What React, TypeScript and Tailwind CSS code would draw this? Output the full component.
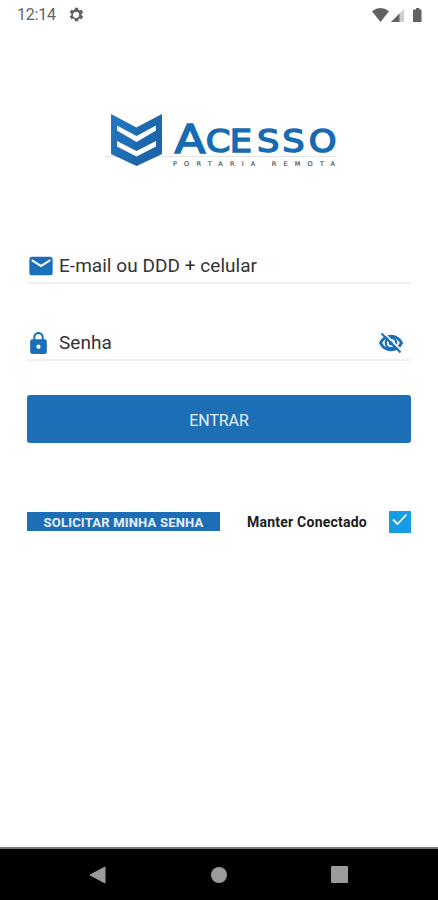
import type { ReactNode } from "react";
import { MdEmail, MdLock, MdSettings } from "react-icons/md";

function StatusBar() {
  return (
    <header className="flex h-7 items-center justify-between pt-px pr-[15px] pl-[17px] text-[#626262]">
      <div className="flex items-center gap-3">
        <span className="text-[16px] leading-7 tracking-[-0.2px]">12:14</span>
        <span className="grid place-items-center">
          <MdSettings className="col-start-1 row-start-1 h-[17px] w-[17px]" />
          <span className="col-start-1 row-start-1 h-[6px] w-[6px] rounded-full bg-white" />
        </span>
      </div>
      <svg viewBox="0 0 52 16" className="h-4 w-[52px]" fill="#626262">
        <path d="M1 4.200Q9.500 -2.200 18 4.200L9.500 15Z" />
        <path d="M33 2V15H20Z" fill="#cfcfcf" />
        <path d="M28.500 6.500V15H20Z" />
        <path d="M44 2.500H45V1H48.500V2.500H50.500V15H42V2.500Z" />
      </svg>
    </header>
  );
}

function Logo() {
  return (
    <svg viewBox="0 0 240 60" className="h-[60px] w-[240px]">
      <defs>
        <linearGradient id="shield" x1="0" y1="0" x2="1" y2="1">
          <stop offset="0" stopColor="#2479c2" />
          <stop offset="1" stopColor="#1b5ea2" />
        </linearGradient>
      </defs>
      <path d="M5 46.500H236" stroke="#e4e4e4" />
      <path d="M11 4L36.500 17.500L62 4V44L36.500 56L11 44Z" fill="url(#shield)" />
      <path d="M36.500 17.500L62 4V44L36.500 56Z" fill="#1d65ac" fillOpacity="0.5" />
      <path d="M17 15.500L36.500 26L56 15.500V20.500L36.500 32L17 20.500Z" fill="#fff" />
      <path d="M17 31L36.500 41L56 31V36.500L36.500 46.500L17 36.500Z" fill="#fff" />
      <g fill="#176bb3" stroke="#176bb3" fontFamily="DejaVu Sans, sans-serif">
        <text x="74.500" y="42.500" fontSize="39.500" textLength="31" lengthAdjust="spacingAndGlyphs" strokeWidth="1.500">A</text>
        <text transform="scale(1.12 1)" x="94.400 115.900 140.200 162.800 186.400" y="42.500" fontSize="31.500" strokeWidth="1.500">CESSO</text>
      </g>
      <text
        x="73"
        y="55.500"
        fontSize="6.500"
        fontFamily="DejaVu Sans, sans-serif"
        fill="#555555"
        stroke="#555555"
        strokeWidth="0.200"
        textLength="162"
      >
        PORTARIA REMOTA
      </text>
    </svg>
  );
}

function EyeOff() {
  return (
    <svg viewBox="0 0 24 22" className="mr-2 h-[22px] w-6" fill="none" stroke="#1b6fb6">
      <path d="M1.500 11C6 2 18 2 22.500 11C18 20 6 20 1.500 11Z" strokeWidth="2.800" />
      <circle cx="12" cy="11" r="5.200" strokeWidth="2.200" />
      <circle cx="12" cy="11" r="2.400" fill="#1b6fb6" stroke="none" />
      <path d="M4.500 0.500L23.500 19.500" stroke="#fff" strokeWidth="1.600" />
      <path d="M2.500 1.500L21.500 20.500" strokeWidth="2.200" />
    </svg>
  );
}

function Field({ icon, label, action }: { icon: ReactNode; label: string; action?: ReactNode }) {
  return (
    <div className="flex h-[34px] items-center border-b-2 border-[#f0f0f0]">
      <span className="flex w-8 shrink-0 text-[#1b6fb6]">{icon}</span>
      <span className="flex-1 text-[19px] leading-8 tracking-[0.04px] text-[#333333]">{label}</span>
      {action}
    </div>
  );
}

function NavBar() {
  return (
    <nav className="flex h-[53px] items-center border-t-2 border-[#777777] bg-black pl-[89px]">
      <svg viewBox="0 0 17 18" className="h-[18px] w-[17px]" fill="#9b9b9b">
        <path d="M1 9L16 1V17Z" stroke="#9b9b9b" strokeLinejoin="round" />
      </svg>
      <span className="ml-[105px] h-4 w-4 rounded-full bg-[#9b9b9b]" />
      <span className="ml-[104px] h-[17px] w-[17px] rounded-[1px] bg-[#9b9b9b]" />
    </nav>
  );
}

export default function App() {
  return (
    <div className="flex h-[900px] w-[438px] flex-col overflow-hidden bg-white font-[Roboto,sans-serif]">
      <StatusBar />
      <main className="flex flex-1 flex-col px-[27px] pt-[82px]">
        <div className="ml-[73px]">
          <Logo />
        </div>
        <form className="mt-20">
          <Field icon={<MdEmail className="h-7 w-7" />} label="E-mail ou DDD + celular" />
          <div className="mt-[43px]">
            <Field icon={<MdLock className="-ml-px h-[25px] w-[25px]" />} label="Senha" action={<EyeOff />} />
          </div>
          <button
            type="button"
            className="mt-[34px] h-12 w-full rounded-[3px] bg-[#1c6fb5] pt-[3px] text-[16px] tracking-[-0.1px] text-[#e5effa]"
          >
            ENTRAR
          </button>
        </form>
        <div className="mt-[67px] flex items-center">
          <button
            type="button"
            className="flex h-[19px] w-[193px] items-center justify-center bg-[#1c6fb5] pt-0.5 text-[13px] font-bold tracking-[0.2px] text-[#e5effa]"
          >
            SOLICITAR MINHA SENHA
          </button>
          <span className="ml-[27px] pt-0.5 text-[14px] font-bold tracking-[0.23px] whitespace-nowrap text-[#1c1c1c]">
            Manter Conectado
          </span>
          <svg viewBox="0 0 22 22" className="ml-auto h-[22px] w-[22px] bg-[#169be5]" fill="none">
            <path d="M4 8.500L8.500 13L17.500 3.500" stroke="#fff" strokeWidth="1.800" />
          </svg>
        </div>
      </main>
      <NavBar />
    </div>
  );
}
